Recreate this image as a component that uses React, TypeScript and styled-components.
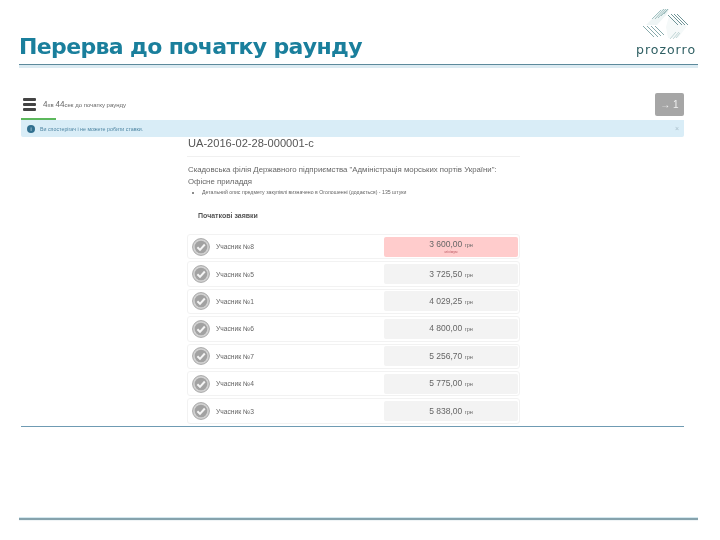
import React from 'react';
import styled, { createGlobalStyle } from 'styled-components';

const bids = [
  { name: 'Учасник №8', price: '3 600,00', best: true },
  { name: 'Учасник №5', price: '3 725,50' },
  { name: 'Учасник №1', price: '4 029,25' },
  { name: 'Учасник №6', price: '4 800,00' },
  { name: 'Учасник №7', price: '5 256,70' },
  { name: 'Учасник №4', price: '5 775,00' },
  { name: 'Учасник №3', price: '5 838,00' },
];

const Logo = () => (
  <LogoWrap>
    <svg width="48" height="33" viewBox="0 0 48 33" fill="none" strokeWidth="0.8">
      <path d="M9 12L20 1H27L25 6L15 17H4Z" fill="#eef5f5" />
      <path d="M27 8L45 18L36 30H26L24 19Z" fill="#f5f9f9" />
      <g stroke="#8db2b2">
        <path d="M10 11l9-9M13 11l9-10M16 10l8-9M19 8l7-7M22 6l4-5" />
      </g>
      <g stroke="#4b7a7d">
        <path d="M26 7l10 10M29 6l11 11M32 6l11 11M35 6l11 11" />
      </g>
      <g stroke="#6a9496">
        <path d="M1 18l11 11M5 18l11 11M9 18l10 10M13 18l9 9" />
      </g>
      <g stroke="#b4cdcd">
        <path d="M28 31l6-7M31 31l6-7M34 30l4-5" />
      </g>
    </svg>
    <LogoText>prozorro</LogoText>
  </LogoWrap>
);

const CheckBadge = () => (
  <svg width="18" height="18" viewBox="0 0 18 18">
    <circle cx="9" cy="9" r="8.4" fill="#d2d2d2" stroke="#a8a8a8" strokeWidth="1" />
    <circle cx="9" cy="9" r="6.3" fill="#a2a2a2" />
    <path d="M5.4 9.2l2.6 2.7 4.8-5.4" fill="none" stroke="#f4f4f4" strokeWidth="2" />
  </svg>
);

const App: React.FC = () => (
  <Page>
    <GlobalStyle />
    <Header>
      <Title>Перерва до початку раунду</Title>
      <Logo />
    </Header>
    <HeaderRule />
    <Shot>
      <TopBar>
        <Burger>
          <span />
          <span />
          <span />
        </Burger>
        <Timer>
          <b>4</b>хв <b>44</b>сек до початку раунду
        </Timer>
        <RoundButton>→ 1</RoundButton>
      </TopBar>
      <Progress />
      <Alert>
        <InfoDot>i</InfoDot>
        <AlertText>Ви спостерігач і не можете робити ставки.</AlertText>
        <AlertClose>×</AlertClose>
      </Alert>
      <Center>
        <TenderId>UA-2016-02-28-000001-c</TenderId>
        <ThinRule />
        <Description>
          Скадовська філія Державного підприємства "Адміністрація морських портів України":
          <br />
          Офісне приладдя
        </Description>
        <Items>
          <li>Детальний опис предмету закупівлі визначено в Оголошенні (додається) - 135 штуки</li>
        </Items>
        <SectionTitle>Початкові заявки</SectionTitle>
        <BidList>
          {bids.map((bid) => (
            <BidRow key={bid.name}>
              <CheckBadge />
              <BidName>{bid.name}</BidName>
              <PriceBox $best={bid.best}>
                <span>
                  {bid.price} <small>грн</small>
                </span>
                {bid.best && <PriceNote>мінімум</PriceNote>}
              </PriceBox>
            </BidRow>
          ))}
        </BidList>
      </Center>
      <ShotRule />
    </Shot>
    <FooterRule />
  </Page>
);

const GlobalStyle = createGlobalStyle`
  html, body {
    margin: 0;
    background: #fff;
  }
`;

const Page = styled.div`
  width: 720px;
  height: 540px;
  overflow: hidden;
  display: flex;
  flex-direction: column;
  padding: 0 22px 0 19px;
  box-sizing: border-box;
  font-family: 'Liberation Sans', Arial, sans-serif;
`;

const Header = styled.div`
  height: 64px;
  display: flex;
  justify-content: space-between;
  align-items: flex-start;
`;

const Title = styled.h1`
  margin: 32px 0 0;
  font: bold 22px/30px 'DejaVu Sans', Verdana, sans-serif;
  letter-spacing: -0.64px;
  color: #1a7f9c;
  white-space: nowrap;
  filter: blur(0.3px);
`;

const LogoWrap = styled.div`
  margin: 8px 1px 0 0;
  width: 62px;
  display: flex;
  flex-direction: column;
  align-items: center;
  filter: blur(0.3px);
`;

const LogoText = styled.div`
  font: 12.5px/14px 'DejaVu Sans', sans-serif;
  letter-spacing: 1px;
  color: #2f5f63;
  margin-top: 2px;
  white-space: nowrap;
`;

const HeaderRule = styled.div`
  height: 1px;
  background: #5d8a9c;
  border-bottom: 3px solid #dcebf2;
`;

const Shot = styled.div`
  width: 663px;
  margin: 23px 0 0 2px;
  display: flex;
  flex-direction: column;
  filter: blur(0.35px);
`;

const TopBar = styled.div`
  height: 26px;
  display: flex;
  align-items: center;
  padding-left: 2px;
`;

const Burger = styled.div`
  width: 13px;
  display: flex;
  flex-direction: column;
  gap: 2px;

  span {
    height: 3px;
    border-radius: 1px;
    background: #444;
  }
`;

const Timer = styled.div`
  margin-left: 7px;
  font-size: 6px;
  color: #666;

  b {
    font-size: 8.2px;
    font-weight: normal;
  }
`;

const RoundButton = styled.div`
  margin-left: auto;
  width: 29px;
  height: 23px;
  border-radius: 2px;
  background: #a6a6a6;
  color: #f0f0f0;
  font-size: 10px;
  display: flex;
  align-items: center;
  justify-content: center;
`;

const Progress = styled.div`
  width: 35px;
  height: 2px;
  margin-top: 1px;
  background: #5cb85c;
`;

const Alert = styled.div`
  height: 17px;
  display: flex;
  align-items: center;
  padding: 0 5px 0 6px;
  background: #d9edf7;
  border-radius: 0 0 2px 2px;
`;

const InfoDot = styled.div`
  width: 8px;
  height: 8px;
  border-radius: 50%;
  background: #31708f;
  color: #d9edf7;
  font-size: 5px;
  line-height: 8px;
  text-align: center;
`;

const AlertText = styled.div`
  margin-left: 5px;
  font-size: 5.3px;
  color: #4f86a3;
`;

const AlertClose = styled.div`
  margin-left: auto;
  font-size: 7px;
  color: #a9bfca;
`;

const Center = styled.div`
  width: 333px;
  margin-left: 166px;
  display: flex;
  flex-direction: column;
`;

const TenderId = styled.div`
  margin: 0 0 0 1px;
  font-size: 11.1px;
  line-height: 12px;
  color: #555;
`;

const ThinRule = styled.div`
  height: 1px;
  margin: 7px 0 7px;
  background: #f0f0f0;
`;

const Description = styled.div`
  margin-left: 1px;
  font-size: 7.8px;
  line-height: 12px;
  color: #666;
  white-space: nowrap;
`;

const Items = styled.ul`
  margin: 0;
  padding: 0 0 0 15px;
  font-size: 5.2px;
  line-height: 9px;
  color: #666;
`;

const SectionTitle = styled.div`
  margin: 14px 0 14px 11px;
  font-size: 7px;
  line-height: 9px;
  font-weight: bold;
  color: #555;
`;

const BidList = styled.div`
  display: flex;
  flex-direction: column;
  gap: 2px;
`;

const BidRow = styled.div`
  height: 25.4px;
  box-sizing: border-box;
  padding: 1px 1px 1px 4px;
  display: flex;
  align-items: center;
  background: #fff;
  border: 1px solid #f2f2f2;
  border-radius: 3px;
`;

const BidName = styled.div`
  margin-left: 6px;
  font-size: 6.7px;
  color: #666;
`;

const PriceBox = styled.div<{ $best?: boolean }>`
  margin-left: auto;
  width: 134px;
  height: 20px;
  box-sizing: border-box;
  padding-top: 1px;
  border-radius: 2px;
  background: ${(p) => (p.$best ? '#ffcccc' : '#f3f3f3')};
  color: #666;
  font-size: 8.5px;
  display: flex;
  flex-direction: column;
  align-items: center;
  justify-content: center;
  line-height: 9px;

  small {
    font-size: 5.5px;
  }
`;

const PriceNote = styled.div`
  font-size: 3.6px;
  line-height: 5px;
  color: #c0626a;
`;

const ShotRule = styled.div`
  height: 1px;
  margin-top: 2px;
  background: #6f9bb3;
`;

const FooterRule = styled.div`
  margin-top: 90px;
  height: 2px;
  background: #86a3ad;
  border-top: 1px solid #d4e8ef;
  box-shadow: 0 1px 1px #eef3f5;
`;

export default App;
